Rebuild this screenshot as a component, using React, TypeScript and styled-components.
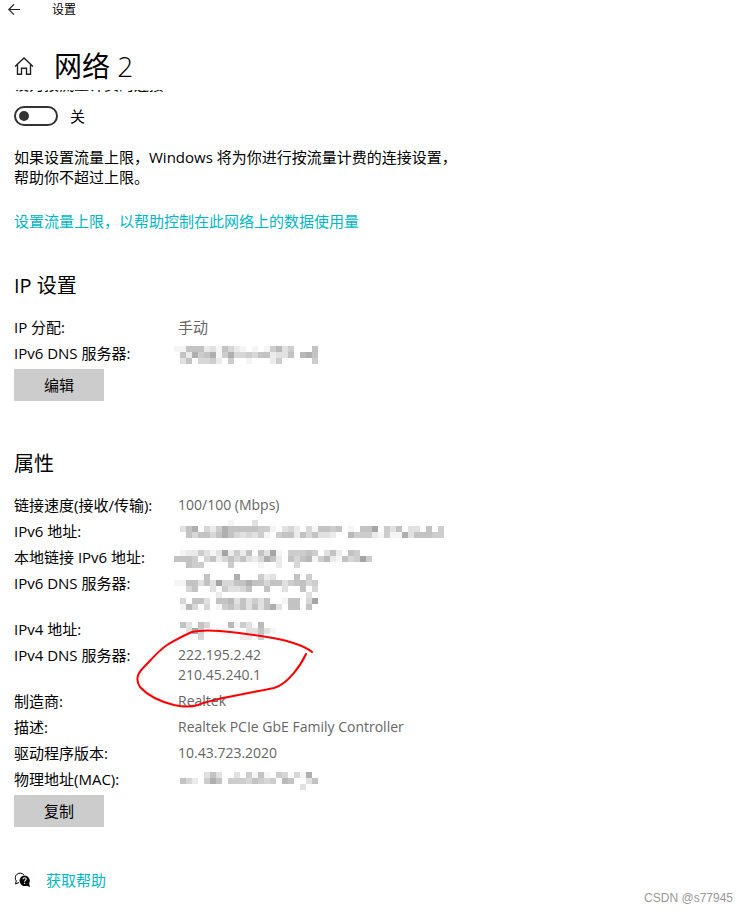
import React from "react";
import styled, { createGlobalStyle } from "styled-components";

const GlobalStyle = createGlobalStyle`
  * { box-sizing: border-box; }
  body {
    margin: 0;
    background: #fff;
    color: #000;
    font-family: "Open Sans", "Noto Sans CJK SC", sans-serif;
    font-size: 15px;
    line-height: 20px;
  }
  h1, h2, p, dl, dd, dt { margin: 0; font-weight: 400; }
`;

const Page = styled.div`
  display: flex;
  flex-direction: column;
`;

const TitleBar = styled.header`
  display: flex;
  align-items: center;
  gap: 32px;
  height: 20px;
  padding-left: 8px;
  font-size: 12px;
`;

const IconButton = styled.button`
  display: flex;
  padding: 0;
  border: 0;
  background: none;
  color: #222;
`;

const PageHeader = styled.div`
  display: flex;
  align-items: center;
  gap: 20px;
  height: 48px;
  margin-top: 22px;
  padding-left: 14px;
`;

const PageTitle = styled.h1`
  font-size: 28px;
  line-height: 40px;
`;

const Thin = styled.span`
  font-weight: 300;
`;

const Content = styled.main`
  display: flex;
  flex-direction: column;
  align-items: flex-start;
  padding: 0 14px;
`;

const ScrolledLabel = styled.div`
  display: flex;
  align-items: flex-end;
  height: 4px;
  overflow: hidden;
`;

const SwitchRow = styled.label`
  display: flex;
  align-items: center;
  gap: 12px;
  margin-top: 12px;
`;

const Switch = styled.input`
  appearance: none;
  display: flex;
  align-items: center;
  width: 44px;
  height: 20px;
  margin: 0;
  padding: 0 3px;
  border: 2px solid #333;
  border-radius: 10px;

  &::before {
    content: "";
    width: 10px;
    height: 10px;
    border-radius: 50%;
    background: #333;
  }
  &:checked { justify-content: flex-end; }
`;

const Note = styled.p`
  max-width: 450px;
  margin-top: 21px;
`;

const Link = styled.a`
  color: #00b7c3;
  text-decoration: none;
`;

const LimitLink = styled(Link)`
  margin-top: 24px;
`;

const Section = styled.section<{ $gap: number }>`
  position: relative;
  margin-top: ${(p) => p.$gap}px;
`;

const SectionTitle = styled.h2`
  font-size: 20px;
  line-height: 28px;
`;

const Details = styled.dl`
  display: grid;
  grid-template-columns: 164px auto;
  row-gap: 6px;
  margin-top: 17px;
`;

const Value = styled.dd`
  color: #666;
`;

const Lines = styled.div`
  display: flex;
  flex-direction: column;
  font-size: 14px;
`;

const ActionButton = styled.button`
  width: 90px;
  height: 32px;
  margin-top: 6px;
  padding: 0;
  border: 0;
  background: #ccc;
  color: #000;
  font: inherit;
`;

const Marker = styled.svg`
  position: absolute;
  top: 176px;
  left: 120px;
  pointer-events: none;
`;

const RedactedBox = styled.div<{ $lines: number }>`
  display: flex;
  align-items: flex-start;
  height: ${(p) => p.$lines * 20}px;
`;

const Redacted = styled.svg<{ $top: number }>`
  flex: none;
  margin: ${(p) => p.$top}px 0 0 -4px;
`;

const HelpRow = styled.div`
  display: flex;
  align-items: center;
  gap: 15px;
  margin-top: 43px;
`;

const Watermark = styled.footer`
  padding-right: 15px;
  color: #999;
  font-family: "Liberation Sans", sans-serif;
  font-size: 12px;
  line-height: 16px;
  text-align: right;
`;

const CELL = 6;

/* Each digit is the darkness of one mosaic cell; a dot is an empty cell. */
function Mosaic({ rows, lines = 1, top = 3 }: { rows: string[]; lines?: number; top?: number }) {
  const cols = Math.max(...rows.map((r) => r.length));
  return (
    <RedactedBox $lines={lines}>
      <Redacted
        $top={top}
        width={cols * CELL}
        height={rows.length * CELL}
        shapeRendering="crispEdges"
        aria-hidden="true"
      >
        {rows.flatMap((row, y) =>
          [...row].map((c, x) => {
            if (c === ".") return null;
            const v = 255 - Number(c) * 10;
            return (
              <rect
                key={`${x}-${y}`}
                x={x * CELL}
                y={y * CELL}
                width={CELL}
                height={CELL}
                fill={`rgb(${v},${v},${v})`}
              />
            );
          })
        )}
      </Redacted>
    </RedactedBox>
  );
}

const ipDns = [
  "116662316421.1.15735...6",
  ".6285681584454662336.786",
  ".36.4452.5..1...25.....5",
];
const ipv6Address = [
  ".........1...3",
  ".368.425866666551.342.416656.1.669.536.33.6.5",
  "..64664686434351.5662646332..7555215118366655",
];
const localAddress = [
  ".122531392526.6391.55565.362.65",
  "6665.4624646324862.64671572164595",
  "..655....5....1..2..4",
];
const propertyDns = [
  ".....6....8...523...6.5",
  "116636394466866466356645",
  "..46..3.53346..6..3..6.4",
  ".......2..............3",
  ".4.663.667363536..166.49",
  ".174.4.15646363683.66.6",
];
const ipv4Address = [
  ".63.64...7153.7",
  "..395..11...33631",
  "....4......22.5",
];
const macAddress = [
  ".....363..3.5161.54.418",
  ".642.586.55546545.76..36",
  ".....................3",
];

const ipRows: [string, React.ReactNode][] = [
  ["IP 分配:", "手动"],
  ["IPv6 DNS 服务器:", <Mosaic rows={ipDns} />],
];

const propertyRows: [string, React.ReactNode][] = [
  ["链接速度(接收/传输):", <Lines>100/100 (Mbps)</Lines>],
  ["IPv6 地址:", <Mosaic rows={ipv6Address} top={-1} />],
  ["本地链接 IPv6 地址:", <Mosaic rows={localAddress} />],
  ["IPv6 DNS 服务器:", <Mosaic rows={propertyDns} lines={2} top={1} />],
  ["IPv4 地址:", <Mosaic rows={ipv4Address} />],
  [
    "IPv4 DNS 服务器:",
    <Lines>
      <span>222.195.2.42</span>
      <span>210.45.240.1</span>
    </Lines>,
  ],
  ["制造商:", <Lines>Realtek</Lines>],
  ["描述:", <Lines>Realtek PCIe GbE Family Controller</Lines>],
  ["驱动程序版本:", <Lines>10.43.723.2020</Lines>],
  ["物理地址(MAC):", <Mosaic rows={macAddress} />],
];

function DetailList({ rows }: { rows: [string, React.ReactNode][] }) {
  return (
    <Details>
      {rows.map(([label, value]) => (
        <React.Fragment key={label}>
          <dt>{label}</dt>
          <Value>{value}</Value>
        </React.Fragment>
      ))}
    </Details>
  );
}

export default function App() {
  return (
    <>
      <GlobalStyle />
      <Page>
        <TitleBar>
          <IconButton aria-label="返回">
            <svg width="12" height="12" viewBox="0 0 12 12" fill="none" stroke="currentColor" strokeWidth="1.2">
              <path d="M12 5.5H.8M6 .3.8 5.5 6 10.7" />
            </svg>
          </IconButton>
          <span>设置</span>
        </TitleBar>
        <PageHeader>
          <IconButton aria-label="主页">
            <svg width="20" height="20" viewBox="0 0 20 20" fill="none" stroke="currentColor" strokeWidth="1.4">
              <path d="M1 10.5 10 2l9 8.5M3.5 8.5v9.8h4v-6h5v6h4V8.5" />
            </svg>
          </IconButton>
          <PageTitle>
            网络 <Thin>2</Thin>
          </PageTitle>
        </PageHeader>
        <Content>
          <ScrolledLabel>设为按流量计费的连接</ScrolledLabel>
          <SwitchRow>
            <Switch type="checkbox" role="switch" />
            <span>关</span>
          </SwitchRow>
          <Note>如果设置流量上限，Windows 将为你进行按流量计费的连接设置，帮助你不超过上限。</Note>
          <LimitLink href="#limit">设置流量上限，以帮助控制在此网络上的数据使用量</LimitLink>

          <Section $gap={41}>
            <SectionTitle>IP 设置</SectionTitle>
            <DetailList rows={ipRows} />
            <ActionButton>编辑</ActionButton>
          </Section>

          <Section $gap={49}>
            <SectionTitle>属性</SectionTitle>
            <DetailList rows={propertyRows} />
            <ActionButton>复制</ActionButton>
            <Marker width="184" height="84" viewBox="134 625 184 84" fill="none" aria-hidden="true">
              <path
                d="M312 651C305 645 296 643 287 640C272 636 250 633 220 630C208 629 200 629 192 631C182 635 174 640 167 644C158 650 151 659 143 667C136 674 136 680 140 686C149 696 162 701 174 704C183 706 192 706 198 704C210 698 245 693 274 687C288 683 301 664 306 653"
                stroke="#ff0000"
                strokeWidth="2"
                strokeLinecap="round"
              />
            </Marker>
          </Section>

          <HelpRow>
            <svg width="17" height="16" viewBox="0 0 17 16" aria-hidden="true">
              <path d="M5 10.5 1.5 12l.8-3A4.8 4.8 0 1 1 10 3" fill="none" stroke="#000" />
              <path d="M10.5 3.5a5.3 5.3 0 0 1 4.6 8l.9 3.5-3.4-1.2A5.3 5.3 0 1 1 10.5 3.5Z" fill="#000" />
              <path d="M9 7.3c0-2.2 3.2-2 3.2-.2 0 1.2-1.6 1.3-1.6 2.7M10.6 10.8v1.2" fill="none" stroke="#fff" strokeWidth="1.1" />
            </svg>
            <Link href="#help">获取帮助</Link>
          </HelpRow>
        </Content>
        <Watermark>CSDN @s77945</Watermark>
      </Page>
    </>
  );
}
